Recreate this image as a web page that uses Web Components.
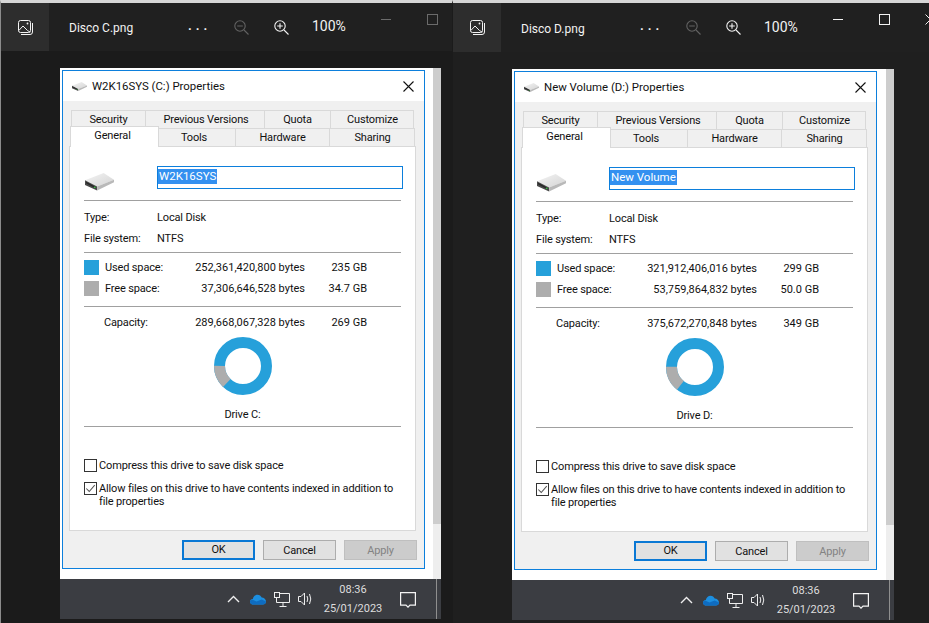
<!DOCTYPE html>
<html>
<head>
<meta charset="utf-8">
<title>Disco C / Disco D</title>
<style>
    html, body { margin: 0; height: 100%; overflow: hidden; background: #1f1f1f; }
    body {
        display: flex;
        font: 11px Roboto, "Liberation Sans", sans-serif;
        color: #111;
    }
</style>
</head>
<body>
<photo-viewer name="Disco C.png" active-controls="false" style="--edge:#8c8c8c;--head:48px;--w:452px;--bg:#1b1b1b;--photo:381px">
    <drive-dialog heading="W2K16SYS (C:) Properties" volume="W2K16SYS" used="252,361,420,800" used-short="235 GB"
        free="37,306,646,528" free-short="34.7 GB" capacity="289,668,067,328" capacity-short="269 GB"
        drive="Drive C:" ratio="0.129"></drive-dialog>
</photo-viewer>
<photo-viewer name="Disco D.png" active-controls="true" style="--edge:#1b1b1b;--head:49px;--w:477px;--bg:#1f1f1f;--photo:382px">
    <drive-dialog heading="New Volume (D:) Properties" volume="New Volume" used="321,912,406,016" used-short="299 GB"
        free="53,759,864,832" free-short="50.0 GB" capacity="375,672,270,848" capacity-short="349 GB"
        drive="Drive D:" ratio="0.143"></drive-dialog>
</photo-viewer>

<script>
class DriveIcon extends HTMLElement {
    constructor() {
        super();
        this.attachShadow({ mode: 'open' });
        this.shadowRoot.innerHTML = `
            <style>
                :host { display: block; line-height: 0; }
                svg { width: 100%; height: auto; display: block; }
            </style>
            <svg viewBox="0 0 28 17">
                <defs>
                    <linearGradient id="top" x1="0" y1="0" x2="1" y2="1">
                        <stop offset="0" stop-color="#f4f4f4"/>
                        <stop offset="1" stop-color="#d4d4d4"/>
                    </linearGradient>
                </defs>
                <polygon points="0,7 18,0 28,6.5 11.7,13" fill="url(#top)"/>
                <polygon points="0,7 11.7,13 11.7,17 0,11.5" fill="#4a4a4a"/>
                <polygon points="11.7,13 28,6.5 28,9 11.7,17" fill="#b9b9b9"/>
                <polygon points="1,8.5 10.5,13.5 10.5,15 1,10" fill="#262626"/>
                <rect x="8.6" y="13.2" width="1.6" height="1.3" fill="#3fc04a"/>
            </svg>`;
    }
}
customElements.define('drive-icon', DriveIcon);

class UsageDonut extends HTMLElement {
    constructor() {
        super();
        this.attachShadow({ mode: 'open' });
    }

    connectedCallback() {
        const ratio = parseFloat(this.getAttribute('ratio')) || 0;
        const r = 23.5;
        const len = 2 * Math.PI * r;
        const start = 180 - ratio * 360;
        this.shadowRoot.innerHTML = `
            <style>
                :host { display: block; width: 58px; height: 58px; }
                svg { display: block; }
            </style>
            <svg width="58" height="58" viewBox="0 0 58 58">
                <circle cx="29" cy="29" r="${r}" fill="none" stroke="#26a0da" stroke-width="11"/>
                <circle cx="29" cy="29" r="${r}" fill="none" stroke="#adadad" stroke-width="11"
                    stroke-dasharray="${len * ratio} ${len}" transform="rotate(${start} 29 29)"/>
            </svg>`;
    }
}
customElements.define('usage-donut', UsageDonut);

class CheckOption extends HTMLElement {
    constructor() {
        super();
        this.attachShadow({ mode: 'open' });
    }

    connectedCallback() {
        const tick = this.hasAttribute('checked')
            ? '<svg viewBox="0 0 13 13" width="11" height="11"><path d="M1.5 6.5 L5 10 L11.5 2.5" fill="none" stroke="#555" stroke-width="1.2"/></svg>'
            : '';
        this.shadowRoot.innerHTML = `
            <style>
                :host { display: flex; align-items: flex-start; gap: 2px; line-height: 13px; }
                .box {
                    flex: none;
                    width: 11px;
                    height: 11px;
                    border: 1px solid #333;
                    background: #fff;
                }
                .box svg { display: block; }
            </style>
            <div class="box">${tick}</div>
            <div class="txt"><slot></slot></div>`;
    }
}
customElements.define('check-option', CheckOption);

class TrayBar extends HTMLElement {
    constructor() {
        super();
        this.attachShadow({ mode: 'open' });
        this.shadowRoot.innerHTML = `
            <style>
                :host {
                    display: flex;
                    align-items: center;
                    justify-content: flex-end;
                    height: 40px;
                    padding-right: 25px;
                    box-sizing: border-box;
                    background: #3b3d42;
                    color: #dedede;
                    position: relative;
                    font-size: 11px;
                }
                svg { display: block; flex: none; }
                .clock { width: 60px; text-align: center; line-height: 18px; margin: 0 17px 0 9px; }
                .clock div + div { margin-top: 1px; }
                .edge { position: absolute; right: 4px; top: 0; bottom: 0; width: 1px; background: #8f8f8f; }
            </style>
            <svg width="13" height="8" viewBox="0 0 13 8" style="margin-right:10px"><path d="M1 7 L6.5 1.5 L12 7" fill="none" stroke="#efefef" stroke-width="1.4"/></svg>
            <svg width="16" height="11" viewBox="0 0 16 11" style="margin-right:8px">
                <path d="M3.6 10.6 C1.5 10.6 0 9.3 0 7.7 C0 6.2 1.2 5.1 2.8 5 C3.4 2.6 5.2 0.8 7.5 0.8 C9.5 0.8 11 1.9 11.7 3.6 C14 3.6 16 5.3 16 7.6 C16 9.4 14.6 10.6 12.8 10.6 Z" fill="#1c8fe0"/>
                <path d="M3.6 10.6 C1.5 10.6 0 9.3 0 7.7 C0 6.6 1 5.6 2 5.4 L6.5 7.6 L11.7 5.4 L16 7.6 C16 9.4 14.6 10.6 12.8 10.6 Z" fill="#0f6cc0"/>
            </svg>
            <svg width="16" height="15" viewBox="0 0 16 15" style="margin-right:8px" fill="none" stroke="#efefef" stroke-width="1">
                <path d="M5.5 1.5 H15.5 V10.5 H2.5 V6"/>
                <rect x="0.5" y="0.5" width="5" height="5" fill="#3b3d42"/>
                <path d="M9 10.5 V14 M5.5 14.5 H12.5"/>
            </svg>
            <svg width="16" height="14" viewBox="0 0 16 14" fill="none" stroke="#efefef" stroke-width="1">
                <path d="M0.5 4.5 H3 L6.5 1 V13 L3 9.5 H0.5 Z"/>
                <path d="M9 4 Q10.5 7 9 10"/>
                <path d="M11.5 2 Q14 7 11.5 12"/>
            </svg>
            <div class="clock"><div>08:36</div><div>25/01/2023</div></div>
            <svg width="16" height="16" viewBox="0 0 16 16" fill="none" stroke="#f4f4f4" stroke-width="1.2" style="margin-top:1px">
                <path d="M0.6 0.6 H15.4 V13.2 H10 L8 15.2 L6 13.2 H0.6 Z"/>
            </svg>
            <div class="edge"></div>`;
    }
}
customElements.define('tray-bar', TrayBar);

class DriveDialog extends HTMLElement {
    constructor() {
        super();
        this.attachShadow({ mode: 'open' });
    }

    connectedCallback() {
        const a = n => this.getAttribute(n) || '';
        this.shadowRoot.innerHTML = `
            <style>
                :host {
                    display: flex;
                    flex-direction: column;
                    box-sizing: border-box;
                    width: 363px;
                    height: 499px;
                    border: 1px solid #0c7fdc;
                    background: #f0f0f0;
                    color: #111;
                    font-size: 11px;
                    letter-spacing: -0.15px;
                    line-height: 16px;
                }
                .title {
                    flex: none;
                    display: flex;
                    align-items: center;
                    height: 30px;
                    background: #fff;
                    padding: 0 10px 0 9px;
                    font-size: 11.4px;
                    letter-spacing: 0;
                }
                .title drive-icon { width: 15px; margin-right: 5px; margin-top: 2px; }
                .title span { flex: 1; }
                .tabs { flex: none; margin: 9px 0 0 6px; height: 36px; }
                .row { display: flex; height: 18px; }
                .row.back { margin-left: 2px; }
                .tab {
                    box-sizing: border-box;
                    border: 1px solid #d9d9d9;
                    border-bottom: 0;
                    margin-right: -1px;
                    text-align: center;
                    line-height: 17px;
                    background: #f0f0f0;
                    flex: none;
                }
                .tab.on {
                    position: relative;
                    z-index: 2;
                    background: #fff;
                    height: 21px;
                    margin-top: -2px;
                    margin-left: 1px;
                    line-height: 17px;
                    border-bottom: 0;
                }
                .panel {
                    box-sizing: border-box;
                    flex: none;
                    width: 347px;
                    height: 385px;
                    margin-left: 6px;
                    padding: 19px 0 0 14px;
                    background: #fff;
                    border: 1px solid #d9d9d9;
                }
                .head { display: flex; height: 23px; }
                .head .ic { flex: none; width: 73px; padding: 7px 0 0 1px; box-sizing: border-box; }
                .head drive-icon { width: 29px; }
                .input {
                    flex: none;
                    box-sizing: border-box;
                    width: 246px;
                    height: 23px;
                    border: 1px solid #0c7fdc;
                    padding: 2px 0 0 0;
                    line-height: 15px;
                    font-size: 11.5px;
                    letter-spacing: 0;
                }
                .input span { background: #3390f0; color: #fff; display: inline-block; padding: 0 1px; }
                hr { border: 0; height: 1px; width: 317px; background: #a0a0a0; margin: 0; }
                .info { display: grid; grid-template-columns: 73px 1fr; grid-auto-rows: 21px; align-items: center; margin-top: 6px; margin-bottom: 3px; }
                .stats {
                    display: grid;
                    grid-template-columns: 21px 60px 140px 62px;
                    grid-auto-rows: 21px;
                    align-items: center;
                    margin: 4px 0 7px;
                    white-space: nowrap;
                }
                .sw { width: 15px; height: 15px; }
                .r { text-align: right; letter-spacing: 0; }
                .cap { margin: 5px 0 4px; }
                .cap span:first-child { grid-column: 1 / span 2; padding-left: 20px; }
                usage-donut { margin-left: 130px; }
                .drv { width: 317px; text-align: center; margin-top: 11px; height: 20px; line-height: 18px; }
                .checks { margin-top: 32px; width: 320px; display: flex; flex-direction: column; gap: 10px; }
                .btns { display: flex; justify-content: flex-end; gap: 8px; padding: 9px 7px 0 0; }
                .btn {
                    box-sizing: border-box;
                    width: 73px;
                    height: 20px;
                    border: 1px solid #adadad;
                    background: #e1e1e1;
                    text-align: center;
                    line-height: 19px;
                }
                .btn.def { border: 2px solid #0a78d4; line-height: 16px; }
                .btn.off { background: #cccccc; border-color: #bfbfbf; color: #838383; }
                .x { display: block; }
            </style>
            <div class="title">
                <drive-icon></drive-icon>
                <span>${a('heading')}</span>
                <svg class="x" width="11" height="11" viewBox="0 0 11 11"><path d="M0.5 0.5 L10.5 10.5 M10.5 0.5 L0.5 10.5" stroke="#111" stroke-width="1.1"/></svg>
            </div>
            <div class="tabs">
                <div class="row back">
                    <div class="tab" style="width:75px">Security</div>
                    <div class="tab" style="width:120px;padding-left:2px">Previous Versions</div>
                    <div class="tab" style="width:67px">Quota</div>
                    <div class="tab" style="width:84px;padding-left:1px">Customize</div>
                </div>
                <div class="row">
                    <div class="tab on" style="width:89px;padding-right:4px">General</div>
                    <div class="tab" style="width:78px;padding-right:6px">Tools</div>
                    <div class="tab" style="width:95px">Hardware</div>
                    <div class="tab" style="width:86px;padding-left:1px">Sharing</div>
                </div>
            </div>
            <div class="panel">
                <div class="head">
                    <div class="ic"><drive-icon></drive-icon></div>
                    <div class="input"><span>${a('volume')}</span></div>
                </div>
                <hr style="margin-top:11px">
                <div class="info">
                    <span>Type:</span><span>Local Disk</span>
                    <span>File system:</span><span>NTFS</span>
                </div>
                <hr>
                <div class="stats">
                    <div class="sw" style="background:#26a0da"></div><span>Used space:</span>
                    <span class="r">${a('used')} bytes</span><span class="r">${a('used-short')}</span>
                    <div class="sw" style="background:#adadad"></div><span>Free space:</span>
                    <span class="r">${a('free')} bytes</span><span class="r">${a('free-short')}</span>
                </div>
                <hr>
                <div class="stats cap">
                    <span>Capacity:</span>
                    <span class="r">${a('capacity')} bytes</span><span class="r">${a('capacity-short')}</span>
                </div>
                <usage-donut ratio="${a('ratio')}"></usage-donut>
                <div class="drv">${a('drive')}</div>
                <hr>
                <div class="checks">
                    <check-option>Compress this drive to save disk space</check-option>
                    <check-option checked>Allow files on this drive to have contents indexed in addition to file properties</check-option>
                </div>
            </div>
            <div class="btns">
                <div class="btn def">OK</div>
                <div class="btn">Cancel</div>
                <div class="btn off">Apply</div>
            </div>`;
    }
}
customElements.define('drive-dialog', DriveDialog);

class PhotoViewer extends HTMLElement {
    constructor() {
        super();
        this.attachShadow({ mode: 'open' });
    }

    connectedCallback() {
        const on = this.getAttribute('active-controls') === 'true';
        const ctl = on ? '#f2f2f2' : '#6b6b6b';
        this.shadowRoot.innerHTML = `
            <style>
                :host {
                    display: block;
                    flex: none;
                    box-sizing: border-box;
                    width: var(--w);
                    height: 623px;
                    border-top: 3px solid #d6d6d6;
                    border-left: 1px solid var(--edge);
                    background: var(--bg);
                    color: #f2f2f2;
                    overflow: hidden;
                }
                .bar {
                    display: flex;
                    align-items: center;
                    height: var(--head);
                    background: #202020;
                    font-size: 12px;
                    white-space: nowrap;
                }
                .bar > * { flex: none; }
                .app {
                    width: 48px;
                    height: 100%;
                    background: #2d2d2d;
                    display: flex;
                    align-items: center;
                    justify-content: center;
                }
                .name { width: 139px; padding: 2px 0 0 20px; box-sizing: border-box; }
                .dots { width: 46px; font-weight: 700; letter-spacing: 4px; font-size: 13px; padding-bottom: 4px; box-sizing: border-box; }
                .zoom { display: flex; gap: 25px; width: 78px; }
                .pct { width: 69px; font-size: 14px; padding-bottom: 2px; box-sizing: border-box; }
                .min { width: 10px; height: 1px; background: ${ctl}; margin: -16px 36px 0 0; }
                .max { box-sizing: border-box; width: 11px; height: 11px; border: 1px solid ${ctl}; margin: -16px 35px 0 0; }
                .close { margin-top: -16px; }
                svg { display: block; flex: none; }
                .stage { padding: 17px 0 0 59px; }
                .photo { width: var(--photo); }
                .sheet { display: flex; background: #fff; height: 511px; }
                .pad { flex: 1; padding: 2px 0 0 2px; }
                .scroll { flex: none; width: 8px; background: #eeeeee; }
                .thumb { height: 456px; background: #cdcdcd; }
            </style>
            <div class="bar">
                <div class="app">
                    <svg width="15" height="15" viewBox="0 0 15 15" fill="none" stroke="#f2f2f2" stroke-width="1">
                        <rect x="0.5" y="0.5" width="12" height="12" rx="2"/>
                        <path d="M0.8 10.5 L5 6 L9.5 10.5 L12.2 12.2"/>
                        <path d="M14.5 3 V12 Q14.5 14.5 12 14.5 H3"/>
                        <circle cx="9.5" cy="3.5" r="0.9" fill="#f2f2f2" stroke="none"/>
                    </svg>
                </div>
                <div class="name">${this.getAttribute('name')}</div>
                <div class="dots">...</div>
                <div class="zoom">
                    <svg width="15" height="15" viewBox="0 0 15 15" fill="none" stroke="#626262" stroke-width="1.1">
                        <circle cx="6" cy="6" r="5.2"/><path d="M10 10 L14.5 14.5 M3.2 6 H8.8"/>
                    </svg>
                    <svg width="15" height="15" viewBox="0 0 15 15" fill="none" stroke="#f2f2f2" stroke-width="1.1">
                        <circle cx="6" cy="6" r="5.2"/><path d="M10 10 L14.5 14.5 M3.2 6 H8.8 M6 3.2 V8.8"/>
                    </svg>
                </div>
                <div class="pct">100%</div>
                <div class="min"></div>
                <div class="max"></div>
                <svg class="close" width="11" height="11" viewBox="0 0 11 11"><path d="M0.5 0.5 L10.5 10.5 M10.5 0.5 L0.5 10.5" stroke="#f2f2f2"/></svg>
            </div>
            <div class="stage">
                <div class="photo">
                    <div class="sheet">
                        <div class="pad"><slot></slot></div>
                        <div class="scroll"><div class="thumb"></div></div>
                    </div>
                    <tray-bar></tray-bar>
                </div>
            </div>`;
    }
}
customElements.define('photo-viewer', PhotoViewer);
</script>
</body>
</html>
